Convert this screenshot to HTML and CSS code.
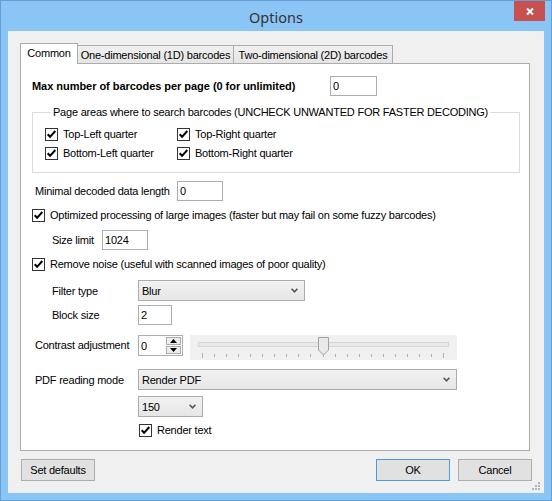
FILE: index.html
```html
<!DOCTYPE html>
<html>
<head>
<meta charset="utf-8">
<link rel="stylesheet" href="styles.css">
</head>
<body>
<div class="window">
  <div class="titlebar">
    <span class="title">Options</span>
    <div class="close"><svg width="31" height="20" viewBox="0 0 31 20"><path d="M13 7.5 L19 13.5 M19 7.5 L13 13.5" stroke="#fff" stroke-width="2" fill="none"/></svg></div>
  </div>
  <div class="client">
    <div class="tabs">
      <div class="tab active">Common</div>
      <div class="tab t1">One-dimensional (1D) barcodes</div>
      <div class="tab t2">Two-dimensional (2D) barcodes</div>
    </div>
    <div class="panel">
      <div class="row r-max">
        <span class="lbl bold w-max">Max number of barcodes per page (0 for unlimited)</span>
        <div class="tb w47">0</div>
      </div>
      <fieldset class="group">
        <legend>Page areas where to search barcodes (UNCHECK UNWANTED FOR FASTER DECODING)</legend>
        <div class="checks">
          <label class="chk"><span class="cb"><svg width="13" height="13" viewBox="0 0 13 13"><rect x="0.5" y="0.5" width="12" height="12" fill="#fff" stroke="#333"/><path d="M2.7 6.2 L5.1 8.8 L10.3 3" fill="none" stroke="#000" stroke-width="2"/></svg></span>Top-Left quarter</label>
          <label class="chk"><span class="cb"><svg width="13" height="13" viewBox="0 0 13 13"><rect x="0.5" y="0.5" width="12" height="12" fill="#fff" stroke="#333"/><path d="M2.7 6.2 L5.1 8.8 L10.3 3" fill="none" stroke="#000" stroke-width="2"/></svg></span>Top-Right quarter</label>
          <label class="chk"><span class="cb"><svg width="13" height="13" viewBox="0 0 13 13"><rect x="0.5" y="0.5" width="12" height="12" fill="#fff" stroke="#333"/><path d="M2.7 6.2 L5.1 8.8 L10.3 3" fill="none" stroke="#000" stroke-width="2"/></svg></span>Bottom-Left quarter</label>
          <label class="chk"><span class="cb"><svg width="13" height="13" viewBox="0 0 13 13"><rect x="0.5" y="0.5" width="12" height="12" fill="#fff" stroke="#333"/><path d="M2.7 6.2 L5.1 8.8 L10.3 3" fill="none" stroke="#000" stroke-width="2"/></svg></span>Bottom-Right quarter</label>
        </div>
      </fieldset>
      <div class="row r-min">
        <span class="lbl in3 w-min">Minimal decoded data length</span>
        <div class="tb w46">0</div>
      </div>
      <div class="row r-opt">
        <label class="chk"><span class="cb"><svg width="13" height="13" viewBox="0 0 13 13"><rect x="0.5" y="0.5" width="12" height="12" fill="#fff" stroke="#333"/><path d="M2.7 6.2 L5.1 8.8 L10.3 3" fill="none" stroke="#000" stroke-width="2"/></svg></span>Optimized processing of large images (faster but may fail on some fuzzy barcodes)</label>
      </div>
      <div class="row r-size">
        <span class="lbl in20 w-size">Size limit</span>
        <div class="tb w46">1024</div>
      </div>
      <div class="row r-noise">
        <label class="chk"><span class="cb"><svg width="13" height="13" viewBox="0 0 13 13"><rect x="0.5" y="0.5" width="12" height="12" fill="#fff" stroke="#333"/><path d="M2.7 6.2 L5.1 8.8 L10.3 3" fill="none" stroke="#000" stroke-width="2"/></svg></span>Remove noise (useful with scanned images of poor quality)</label>
      </div>
      <div class="row r-filter">
        <span class="lbl in20 w-sub">Filter type</span>
        <div class="combo w167"><span>Blur</span><svg width="7" height="5" viewBox="0 0 7 5"><path d="M0.6 0.8 L3.5 3.8 L6.4 0.8" fill="none" stroke="#555" stroke-width="1.6"/></svg></div>
      </div>
      <div class="row r-block">
        <span class="lbl in20 w-sub">Block size</span>
        <div class="tb w34">2</div>
      </div>
      <div class="row r-contrast">
        <span class="lbl in3 w-main">Contrast adjustment</span>
        <div class="num">
          <span class="numval">0</span>
          <div class="spin">
            <div class="sbtn"><svg width="7" height="4" viewBox="0 0 7 4"><path d="M0 4 L3.5 0 L7 4 Z" fill="#000"/></svg></div>
            <div class="sbtn"><svg width="7" height="4" viewBox="0 0 7 4"><path d="M0 0 L7 0 L3.5 4 Z" fill="#000"/></svg></div>
          </div>
        </div>
        <svg class="track" width="267" height="25" viewBox="0 0 267 25">
          <rect x="0" y="0" width="267" height="25" fill="#f0f0f0"/>
          <rect x="8.5" y="7.5" width="250" height="4" fill="#e7eaea" stroke="#d6d6d6"/>
          <g stroke="#b0b0b0" stroke-width="1">
            <path d="M12.5 18 V23"/><path d="M24.5 19 V22"/><path d="M36.5 19 V22"/><path d="M48.5 19 V22"/><path d="M60.5 19 V22"/><path d="M72.5 19 V22"/><path d="M84.5 19 V22"/><path d="M96.5 19 V22"/><path d="M108.5 19 V22"/><path d="M120.5 19 V22"/><path d="M133.5 19 V22"/><path d="M145.5 19 V22"/><path d="M157.5 19 V22"/><path d="M169.5 19 V22"/><path d="M181.5 19 V22"/><path d="M193.5 19 V22"/><path d="M205.5 19 V22"/><path d="M217.5 19 V22"/><path d="M229.5 19 V22"/><path d="M241.5 19 V22"/><path d="M253.5 18 V23"/>
          </g>
          <path d="M128.5 2.5 H138.5 V15 L133.5 20 L128.5 15 Z" fill="#e9e9e9" stroke="#a2a2a2"/>
        </svg>
      </div>
      <div class="row r-pdf">
        <span class="lbl in3 w-main">PDF reading mode</span>
        <div class="combo w319"><span>Render PDF</span><svg width="7" height="5" viewBox="0 0 7 5"><path d="M0.6 0.8 L3.5 3.8 L6.4 0.8" fill="none" stroke="#555" stroke-width="1.6"/></svg></div>
      </div>
      <div class="row r-dpi">
        <div class="combo w65"><span>150</span><svg width="7" height="5" viewBox="0 0 7 5"><path d="M0.6 0.8 L3.5 3.8 L6.4 0.8" fill="none" stroke="#555" stroke-width="1.6"/></svg></div>
      </div>
      <div class="row r-render">
        <label class="chk"><span class="cb"><svg width="13" height="13" viewBox="0 0 13 13"><rect x="0.5" y="0.5" width="12" height="12" fill="#fff" stroke="#333"/><path d="M2.7 6.2 L5.1 8.8 L10.3 3" fill="none" stroke="#000" stroke-width="2"/></svg></span>Render text</label>
      </div>
    </div>
    <div class="buttons">
      <div class="btn">Set defaults</div>
      <div class="spacer"></div>
      <div class="btn ok">OK</div>
      <div class="btn">Cancel</div>
    </div>
    <svg class="grip" width="12" height="12" viewBox="0 0 12 12">
      <g fill="#b4b4b4"><rect x="8" y="2" width="2" height="2"/><rect x="5" y="5" width="2" height="2"/><rect x="8" y="5" width="2" height="2"/><rect x="2" y="8" width="2" height="2"/><rect x="5" y="8" width="2" height="2"/><rect x="8" y="8" width="2" height="2"/></g>
    </svg>
  </div>
</div>
</body>
</html>
```
FILE: styles.css
```css
* { box-sizing: border-box; }
html, body { margin: 0; padding: 0; }
body {
  background: #8bc5f6;
  font-family: "Liberation Sans", Arial, sans-serif;
  font-size: 11px;
  letter-spacing: -0.22px;
  color: #000;
}
.window {
  width: 552px;
  height: 501px;
  border: 1px solid #639fd6;
  background: #8bc5f6;
  padding: 0 7px 7px 7px;
  display: flex;
  flex-direction: column;
}
.titlebar {
  height: 30px;
  margin: 0 -7px;
  padding: 0 6px;
  display: grid;
  grid-template-columns: 1fr auto 1fr;
}
.title {
  grid-column: 2;
  align-self: center;
  font-family: "Noto Sans", "Open Sans", sans-serif;
  font-size: 14.5px;
  letter-spacing: 0;
  color: #333;
  line-height: 20px;
  margin-top: 1px;
}
.close {
  grid-column: 3;
  justify-self: end;
  align-self: start;
  width: 31px;
  height: 20px;
  background: #c75050;
  display: flex;
}
.client {
  flex: 1;
  background: #f0f0f0;
  padding: 12px 12px 12px 12px;
  display: flex;
  flex-direction: column;
  position: relative;
}
.tabs {
  display: flex;
  align-items: flex-end;
  height: 20px;
  flex: none;
}
.tab {
  height: 18px;
  border: 1px solid #acacac;
  border-bottom: none;
  background: linear-gradient(#f0f0f0, #e5e5e5);
  text-align: center;
  line-height: 15px;
  padding-top: 2px;
  white-space: nowrap;
}
.tab.active {
  width: 58px;
  height: 21px;
  margin-bottom: -1px;
  background: #fff;
  position: relative;
  z-index: 1;
  line-height: 19px;
  padding-top: 0;
}
.t1 { width: 156px; border-left: none; }
.t2 { width: 159px; border-left: none; }
.panel {
  flex: none;
  width: 510px;
  height: 388px;
  border: 1px solid #acacac;
  background: #fff;
  padding-left: 11px;
  display: flex;
  flex-direction: column;
}
.row {
  display: flex;
  align-items: center;
  flex: none;
}
.lbl { white-space: nowrap; flex: none; }
.bold { font-weight: bold; letter-spacing: -0.04px; }
.in3 { padding-left: 3px; }
.in20 { padding-left: 20px; }
.w-max { width: 298px; }
.w-min { width: 145px; }
.w-size { width: 70px; }
.w-sub { width: 106px; }
.w-main { width: 106px; }
.tb {
  height: 20px;
  border: 1px solid #abadb3;
  background: #fff;
  padding-left: 2px;
  line-height: 18px;
  flex: none;
}
.w47 { width: 47px; }
.w46 { width: 46px; }
.w34 { width: 34px; }
.r-max { margin-top: 12px; height: 20px; }
.group {
  margin: 10px 0 0 0;
  width: 488px;
  border: 1px solid #dcdcdc;
  padding: 9px 0 12px 12px;
  min-inline-size: 0;
}
.group legend {
  margin-left: 6px;
  padding: 0 2px;
  line-height: 13px;
  white-space: nowrap;
}
.checks {
  display: grid;
  grid-template-columns: 132px auto;
  row-gap: 6px;
}
.chk {
  display: flex;
  align-items: center;
  gap: 5px;
  line-height: 13px;
  white-space: nowrap;
}
.cb { width: 13px; height: 13px; display: flex; flex: none; }
.r-min { margin-top: 8px; height: 20px; }
.r-opt { margin-top: 8px; height: 13px; }
.r-size { margin-top: 8px; height: 20px; }
.r-noise { margin-top: 8px; height: 13px; }
.r-filter { margin-top: 9px; height: 21px; }
.r-block { margin-top: 4px; height: 20px; }
.r-contrast { margin-top: 10px; height: 25px; align-items: flex-start; }
.r-contrast .lbl { line-height: 21px; }
.r-pdf { margin-top: 9px; height: 21px; }
.r-dpi { margin-top: 6px; height: 21px; padding-left: 106px; }
.r-render { margin-top: 7px; height: 13px; padding-left: 107px; }
.combo {
  height: 21px;
  border: 1px solid #acacac;
  background: linear-gradient(#f2f2f2, #e6e6e6);
  display: flex;
  align-items: center;
  justify-content: space-between;
  padding: 0 6px 0 3px;
  flex: none;
}
.w167 { width: 167px; }
.w319 { width: 319px; }
.w65 { width: 65px; }
.num {
  width: 45px;
  height: 21px;
  border: 1px solid #abadb3;
  background: #fff;
  display: flex;
  align-items: center;
  flex: none;
}
.numval { padding-left: 2px; flex: 1; }
.spin {
  width: 15px;
  height: 17px;
  margin-right: 1px;
  display: flex;
  flex-direction: column;
  gap: 1px;
}
.sbtn {
  flex: 1;
  border: 1px solid #acacac;
  background: #ececec;
  display: flex;
  align-items: center;
  justify-content: center;
}
.track { margin-left: 7px; flex: none; display: block; }
.buttons {
  margin-top: 8px;
  height: 22px;
  display: flex;
  gap: 8px;
  padding: 0 0 0 1px;
  flex: none;
}
.spacer { flex: 1; }
.btn {
  width: 74px;
  height: 22px;
  border: 1px solid #adadad;
  background: #e1e1e1;
  text-align: center;
  line-height: 20px;
  flex: none;
}
.btn.ok { border-color: #4b9be6; }
.grip { position: absolute; right: 2px; bottom: 1px; }
```
